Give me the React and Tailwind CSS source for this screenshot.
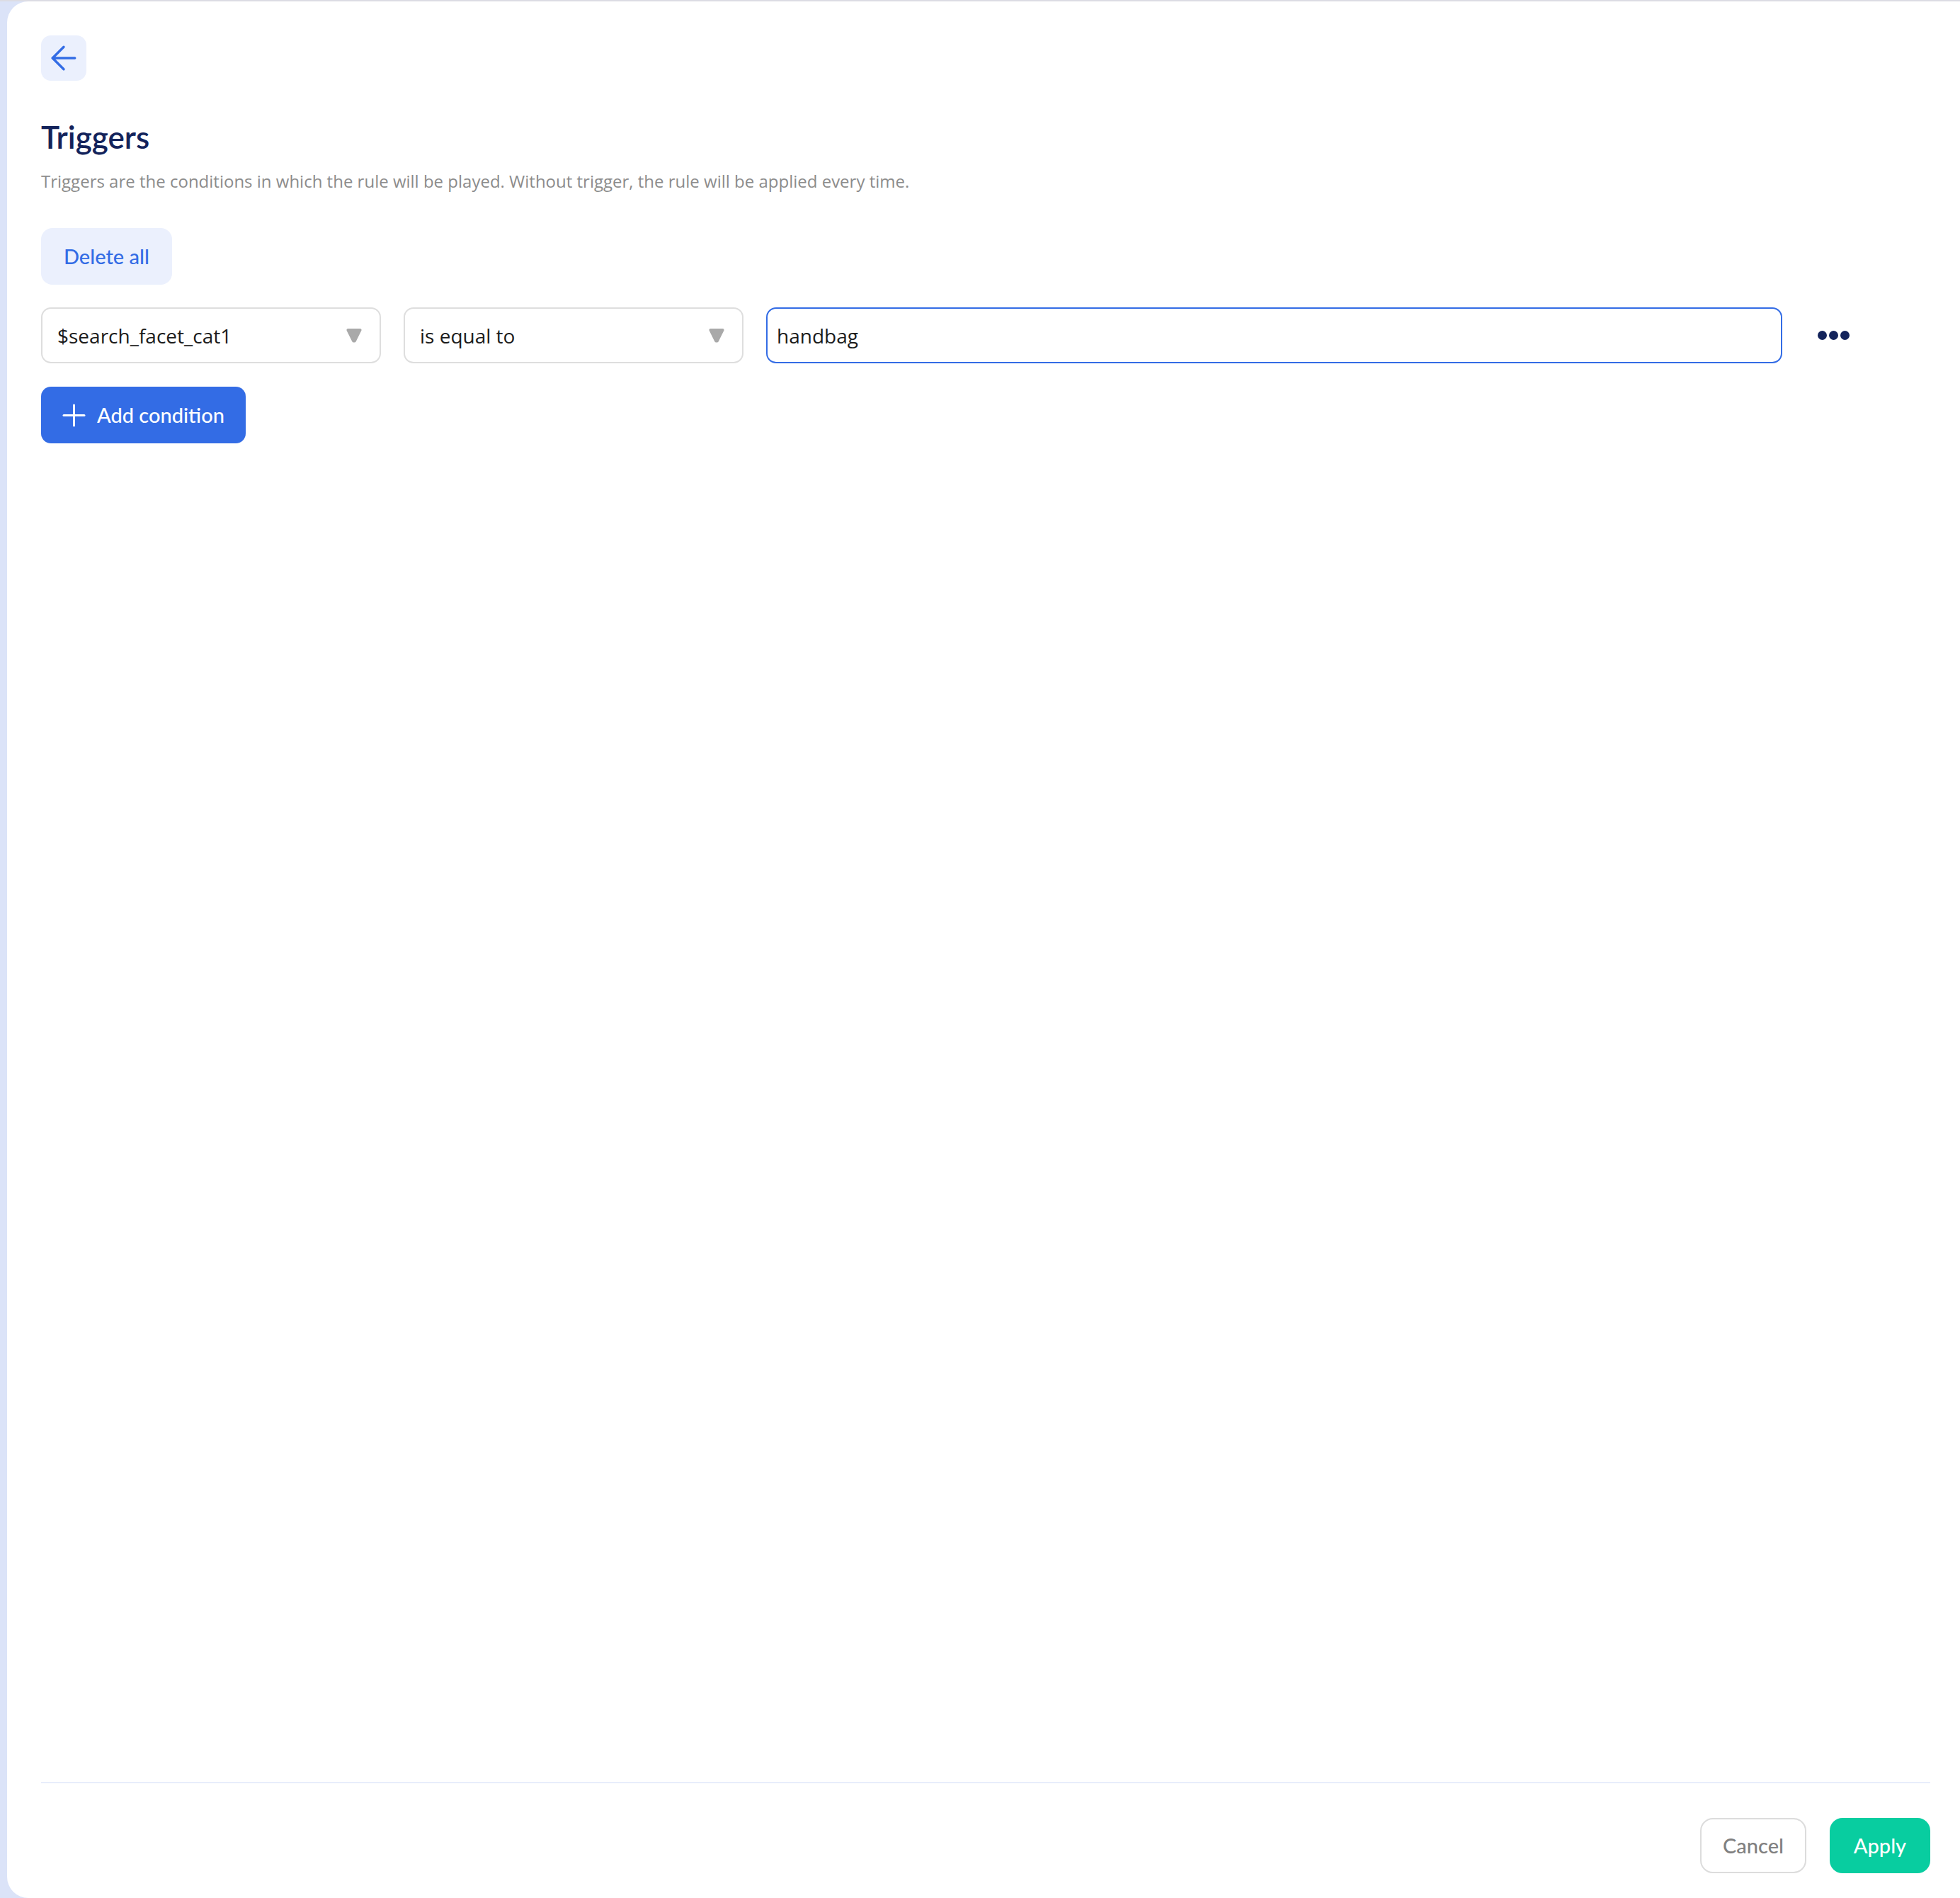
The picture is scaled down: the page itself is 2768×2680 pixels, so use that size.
import React from 'react';
import { ArrowLeft } from 'lucide-react';

// Small rounded "shield" caret used in the select boxes
function Caret() {
  return (
    <svg width="22" height="21" viewBox="0 0 22 21" fill="#a9a9a9">
      <path d="M2.4 1h17.2c1.5 0 2.3 1.3 1.8 2.7L14.2 18.2c-.8 1.9-2 2.4-3.2 2.4s-2.4-.5-3.2-2.4L.6 3.7C.1 2.3.9 1 2.4 1z" />
    </svg>
  );
}

function Select({ value }) {
  return (
    <div className="w-[480px] h-[79px] shrink-0 border-2 border-[#dedede] rounded-[14px] pl-[21px] pr-[25px] flex items-center justify-between bg-white">
      <span className="font-['Open_Sans',sans-serif] text-[28px] text-[#1c1c1c]">{value}</span>
      <Caret />
    </div>
  );
}

export default function App() {
  return (
    <div className="min-h-[2680px] w-full bg-[#dbe3f8] border-t-2 border-[#dcdce3] flex">
      <div className="ml-[10px] flex-1 bg-white rounded-l-[30px] flex flex-col pl-[48px] pr-[42px] pt-[48px] pb-[35px] font-['Lato',sans-serif]">
        {/* Back */}
        <button className="w-16 h-16 rounded-[14px] bg-[#ebf0fd] flex items-center justify-center">
          <ArrowLeft size={54} strokeWidth={1.5} color="#336ce5" />
        </button>

        <h1 className="mt-[57px] text-[44px] leading-[44px] font-semibold text-[#13235b]">Triggers</h1>
        <p className="mt-[24px] font-['Open_Sans',sans-serif] text-[24px] leading-[34px] text-[#8c8c8c]">
          Triggers are the conditions in which the rule will be played. Without trigger, the rule will be applied every time.
        </p>

        <button className="mt-[49px] self-start h-[80px] px-[32px] rounded-[16px] bg-[#ebf0fd] text-[#336ce5] text-[29px] font-medium">
          Delete all
        </button>

        {/* Condition row */}
        <div className="mt-[32px] flex items-center gap-[32px]">
          <Select value="$search_facet_cat1" />
          <Select value="is equal to" />
          <div className="flex-1 h-[79px] border-2 border-[#336ce5] rounded-[14px] px-[13px] flex items-center">
            <span className="font-['Open_Sans',sans-serif] text-[28px] text-[#1c1c1c]">handbag</span>
          </div>
          <div className="w-[177px] shrink-0 pl-[18px] flex items-center gap-[3px]">
            <span className="w-[13px] h-[13px] rounded-full bg-[#13235b]" />
            <span className="w-[13px] h-[13px] rounded-full bg-[#13235b]" />
            <span className="w-[13px] h-[13px] rounded-full bg-[#13235b]" />
          </div>
        </div>

        <button className="mt-[33px] self-start h-[80px] pl-[30px] pr-[30px] rounded-[14px] bg-[#336ce5] text-white text-[29px] font-medium flex items-center gap-[16px]">
          <svg width="33" height="33" viewBox="0 0 33 33" stroke="white" strokeWidth="3" strokeLinecap="round">
            <line x1="16.5" y1="2" x2="16.5" y2="31" />
            <line x1="2" y1="16.5" x2="31" y2="16.5" />
          </svg>
          Add condition
        </button>

        <div className="flex-1" />

        {/* Footer */}
        <div className="h-[2px] bg-[#e8edfb]" />
        <div className="mt-[49px] flex justify-end gap-[33px]">
          <button className="h-[78px] w-[150px] rounded-[18px] border-2 border-[#dcdcdc] text-[#808080] text-[29px] font-medium">
            Cancel
          </button>
          <button className="h-[78px] w-[142px] rounded-[18px] bg-[#08cda0] text-white text-[29px] font-medium">
            Apply
          </button>
        </div>
      </div>
    </div>
  );
}
